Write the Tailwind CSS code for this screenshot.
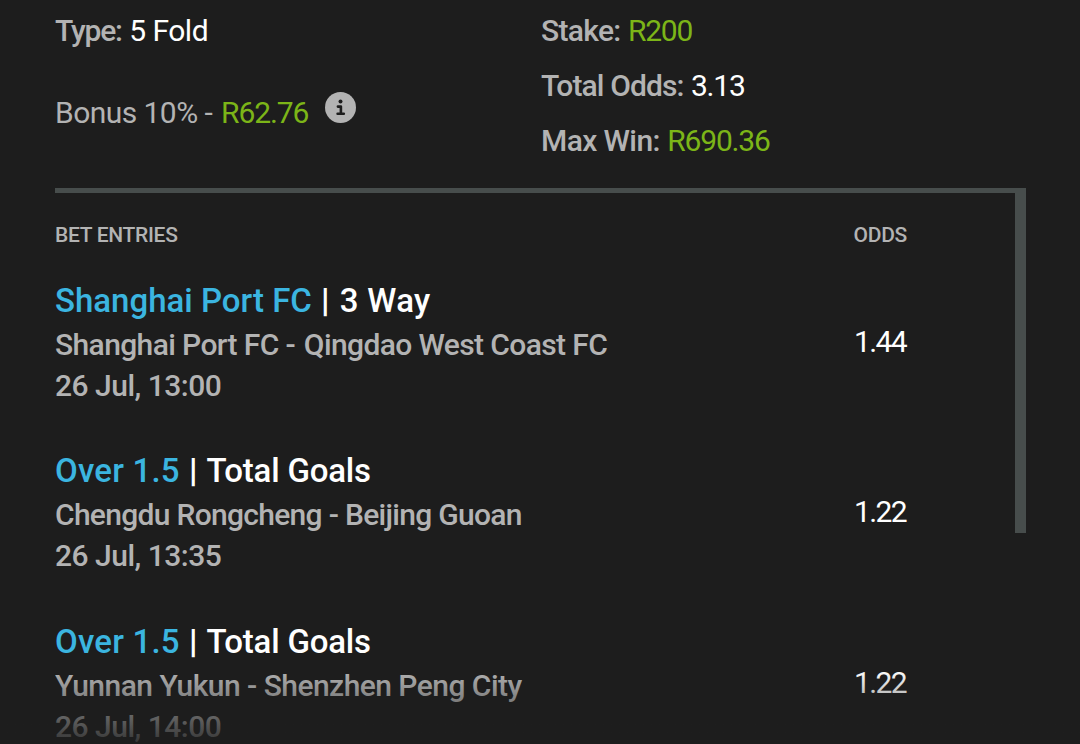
<!DOCTYPE html>
<html lang="en">
<head>
    <meta charset="UTF-8">
    <meta name="viewport" content="width=device-width, initial-scale=1.0">
    <title>Bet Details</title>
    <script src="https://cdn.jsdelivr.net/npm/@tailwindcss/browser@4"></script>
</head>
<body class="relative h-[744px] overflow-hidden bg-[#1d1d1d] pl-[55px] pr-[54px] pt-[3px] font-['Roboto','Liberation_Sans',sans-serif] text-[30px] text-[#b3b3b3]">
    <!-- Summary -->
    <section class="flex h-[185px] leading-[55px] whitespace-nowrap">
        <div class="w-[486px]">
            <p><span class="font-medium tracking-[-1.2px]">Type:</span> <span class="tracking-[-0.5px] text-white">5 Fold</span></p>
            <div class="mt-[27px] flex">
                <p class="tracking-[-0.55px]">Bonus 10% - <span class="ml-0.5 tracking-[-1.1px] text-[#7cb518]">R62.76</span></p>
                <svg class="ml-[17px] mt-[7px] size-[31px]" viewBox="0 0 31 31">
                    <circle cx="15.5" cy="15.5" r="15.5" fill="#b3b3b3"/>
                    <circle cx="15.5" cy="9.6" r="2" fill="#1d1d1d"/>
                    <path d="M12.9 14.6h3v7M12.6 21.7h6.2" fill="none" stroke="#1d1d1d" stroke-width="2.6" stroke-linecap="round" stroke-linejoin="round"/>
                </svg>
            </div>
        </div>
        <div>
            <p><span class="font-medium tracking-[-0.7px]">Stake:</span> <span class="tracking-[-1.2px] text-[#7cb518]">R200</span></p>
            <p><span class="font-medium tracking-[-0.9px]">Total Odds:</span> <span class="tracking-[-1.2px] text-white">3.13</span></p>
            <p><span class="font-medium tracking-[-0.6px]">Max Win:</span> <span class="tracking-[-1.2px] text-[#7cb518]">R690.36</span></p>
        </div>
    </section>

    <!-- Bet entries -->
    <section class="flex h-[556px] items-start overflow-hidden border-t-5 border-[#474d4c]">
        <div class="flex-1 pt-[27px] pr-[109px] whitespace-nowrap">
            <div class="mb-7 flex justify-between text-[21px] leading-[30px] font-medium tracking-[-0.3px]">
                <span>BET ENTRIES</span>
                <span class="-mr-px">ODDS</span>
            </div>
            <div class="mb-[42px] flex items-center justify-between">
                <div class="leading-[41px] font-medium">
                    <h3 class="mb-px text-[33px] leading-[45px] text-white"><span class="text-[#3bb5e0]">Shanghai Port FC</span> <span class="mx-px font-black">|</span> <span class="ml-px tracking-[0.3px]">3 Way</span></h3>
                    <p class="tracking-[-0.62px]">Shanghai Port FC - <span class="ml-0.5">Qingdao West Coast FC</span></p>
                    <p class="tracking-[-0.5px]">26 Jul, 13:00</p>
                </div>
                <span class="mb-0.5 tracking-[-1.6px] text-white">1.44</span>
            </div>
            <div class="mb-[43px] flex items-center justify-between">
                <div class="leading-[41px] font-medium">
                    <h3 class="mb-px text-[33px] leading-[45px] text-white"><span class="tracking-[0.2px] text-[#3bb5e0]">Over 1.5</span> <span class="mx-px font-black">|</span> <span class="tracking-[-0.2px]">Total Goals</span></h3>
                    <p class="tracking-[-0.7px]">Chengdu Rongcheng - Beijing Guoan</p>
                    <p class="tracking-[-0.5px]">26 Jul, 13:35</p>
                </div>
                <span class="mb-0.5 tracking-[-1.6px] text-white">1.22</span>
            </div>
            <div class="flex items-center justify-between">
                <div class="leading-[41px] font-medium">
                    <h3 class="mb-px text-[33px] leading-[45px] text-white"><span class="tracking-[0.2px] text-[#3bb5e0]">Over 1.5</span> <span class="mx-px font-black">|</span> <span class="tracking-[-0.2px]">Total Goals</span></h3>
                    <p class="tracking-[-0.54px]">Yunnan Yukun - Shenzhen Peng City</p>
                    <p class="tracking-[-0.5px]">26 Jul, 14:00</p>
                </div>
                <span class="mb-0.5 tracking-[-1.6px] text-white">1.22</span>
            </div>
        </div>
        <!-- Scrollbar -->
        <div class="h-[340px] w-[11px] bg-[#474d4c]"></div>
    </section>

    <!-- Bottom fade -->
    <div class="absolute inset-x-0 bottom-0 h-[74px] bg-linear-to-b from-[#1d1d1d]/0 to-[#1d1d1d]/85"></div>
</body>
</html>
